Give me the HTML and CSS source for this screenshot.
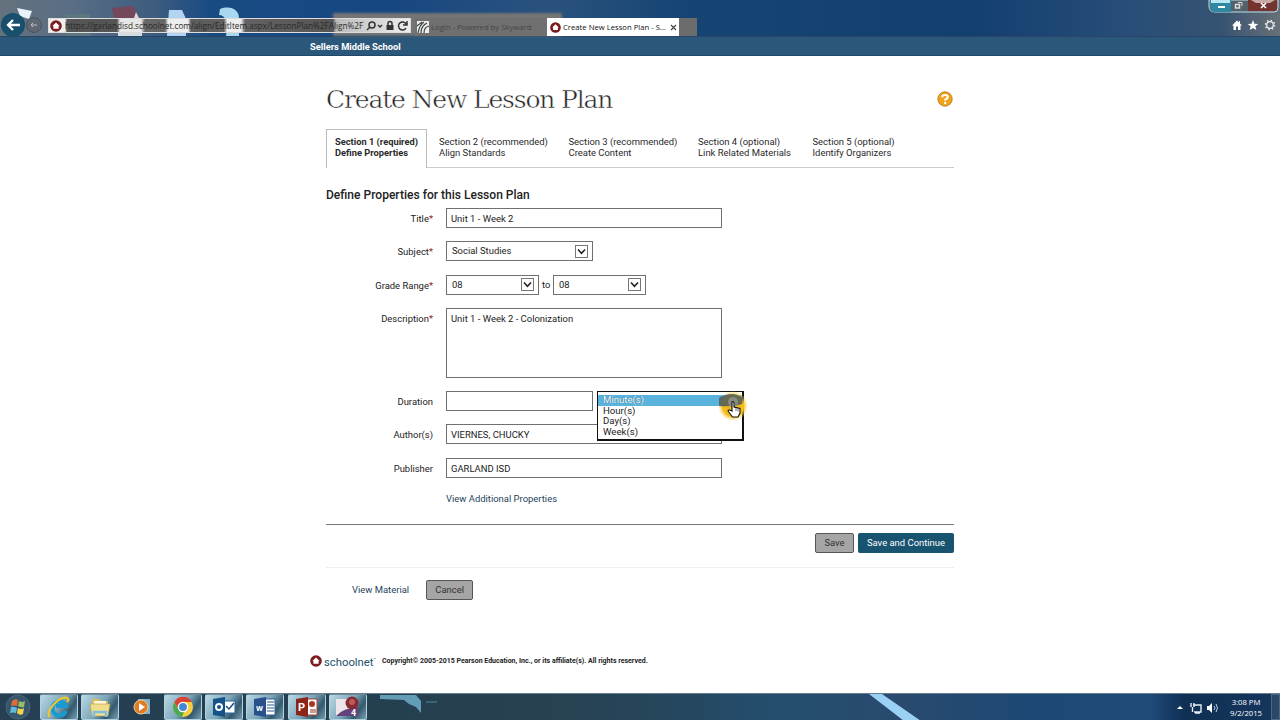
FILE: index.html
```html
<!DOCTYPE html>
<html lang="en">
<head>
<meta charset="UTF-8">
<meta name="viewport" content="width=device-width, initial-scale=1.0">
<title>Create New Lesson Plan - Schoolnet</title>
<link rel="stylesheet" href="styles.css">
</head>
<body>

<!-- shared symbols -->
<svg class="defs" width="0" height="0">
    <symbol id="badge" viewBox="0 0 12 12">
        <circle cx="6" cy="6" r="5.8" fill="#7c1c20"/>
        <path d="M6 2.5 L9.6 6 H8.6 V8.8 H3.4 V6 H2.4 Z" fill="#fff"/>
    </symbol>
    <symbol id="chevron" viewBox="0 0 13 13">
        <rect x=".5" y=".5" width="12" height="12" fill="#fff" stroke="#777"/>
        <path d="M3 4.5 L6.5 8.300 L10 4.5" fill="none" stroke="#222" stroke-width="1.6"/>
    </symbol>
</svg>

<header class="browser">
    <svg class="wallpaper" width="1280" height="36">
        <g filter="url(#soft)">
            <path d="M17 8 L32 11 L29 19 L20 16Z" fill="#e8f2f8"/>
            <path d="M64 14 H90 V36 H66Z" fill="#5c7780"/>
            <path d="M112 8 L133 6 L140 18 H114Z" fill="#74475a"/>
            <path d="M136 12 L139 18 H134Z" fill="#d4dce2"/>
            <path d="M118 18 H142 V36 H118Z" fill="#d4dce2"/>
            <path d="M169 10 H182 L186 19 V36 H167 Z" fill="#b3d5f3"/>
            <path d="M220 9 C231 5 239 10 239 18 V36 H226 C229 22 225 15 219 15Z" fill="#a9d9ef"/>
        </g>
        <defs><filter id="soft"><feGaussianBlur stdDeviation=".7"/></filter></defs>
    </svg>
    <div class="nav-buttons">
        <svg width="48" height="36" viewBox="0 0 48 36">
            <circle cx="13" cy="25" r="12" fill="#174f6c"/>
            <path d="M20 25 H8 M13 20 L8 25 L13 30" fill="none" stroke="#fff" stroke-width="2.3"/>
            <circle cx="34" cy="25" r="7.5" fill="#5f6873" stroke="#485361"/>
            <path d="M37 25 H31 M33 23 L31 25 L33 27" fill="none" stroke="#b9c0c6"/>
        </svg>
    </div>
    <div class="address">
        <svg width="12" height="12"><use href="#badge"/></svg>
        <span class="url">https://garlandisd.schoolnet.com/align/EditItem.aspx/LessonPlan%2FAlign%2F</span>
        <svg class="address-tools" width="44" height="12" viewBox="0 0 44 12">
            <g fill="none" stroke="#333" stroke-width="1.5">
                <circle cx="6" cy="5" r="3"/><path d="M4 7 L1 10"/>
                <path d="M12 5 L14 7 L16 5"/>
                <path d="M22 5 V3.5 A2 2 0 0 1 26 3.5 V5"/>
                <path d="M40 4 A4 4 0 1 0 40 8 M41 1 V5 H37"/>
            </g>
            <rect x="20.5" y="5" width="7" height="5" fill="#333"/>
        </svg>
    </div>
    <div class="tab">
        <svg width="12" height="12" viewBox="0 0 12 12">
            <rect width="12" height="12" fill="#eee"/>
            <path d="M1 12 C2 7 4 3 7 1 M4 12 C4 8 6 4 10 2 M7 12 C7 8 8 6 12 5 M0 5 L5 1" fill="none" stroke="#3c4446" stroke-width="1.2"/>
        </svg>
        <span>Login - Powered by Skyward</span>
    </div>
    <div class="tab active">
        <svg width="11" height="11"><use href="#badge"/></svg>
        <span>Create New Lesson Plan - S...</span>
        <svg class="close" width="7" height="7" viewBox="0 0 7 7"><path d="M1 1 L6 6 M6 1 L1 6" stroke="#444" stroke-width="1.2"/></svg>
    </div>
    <div class="new-tab"></div>
    <div class="window-area">
        <svg width="72" height="14" viewBox="0 0 72 14">
            <path d="M1 0 H70 V8 Q70 12 66 12 H7 Q1 12 1 6 Z" fill="#53616b" stroke="#bfdbe5"/>
            <path d="M2 0 H23 V12 H7 Q2 12 2 6Z" fill="#2f87a1"/>
            <path d="M3 0 H22 V3 H3Z" fill="#b8e7f4"/>
            <path d="M40 0 H69 V8 Q69 11 66 11 H40Z" fill="#74332f"/>
            <path d="M43 0 H67 L62 3 H48Z" fill="#c9a9a4"/>
            <path d="M10 7 H17" stroke="#fff" stroke-width="2"/>
            <rect x="27.5" y="4.5" width="4" height="3.5" fill="none" stroke="#ddd" stroke-width="1.5"/>
            <path d="M30 2.5 H34 V6" fill="none" stroke="#ddd"/>
            <path d="M53 3 L58 8 M58 3 L53 8" stroke="#fff" stroke-width="1.6"/>
        </svg>
        <svg class="tools" width="48" height="12" viewBox="0 0 48 12">
            <path d="M1 6.5 L6 1.5 L8 3.5 V2 H9 V4.5 L11 6.5 H9.5 V11 H7 V7.5 H5 V11 H2.5 V6.5Z" fill="#fff"/>
            <path d="M22 1 L23.4 4.7 L27.3 4.9 L24.3 7.3 L25.3 11 L22 8.9 L18.7 11 L19.7 7.3 L16.7 4.9 L20.6 4.7Z" fill="#fff"/>
            <circle cx="39" cy="6" r="3.3" fill="none" stroke="#f2f2f2" stroke-width="1.2"/>
            <circle cx="39" cy="6" r="4.7" fill="none" stroke="#f2f2f2" stroke-width="1.2" stroke-dasharray="1.5 2.19"/>
        </svg>
    </div>
</header>

<div class="school-bar">Sellers Middle School</div>

<main class="page">
    <div class="title-row">
        <h1>Create New Lesson Plan</h1>
        <svg width="16" height="16" viewBox="0 0 16 16">
            <circle cx="8" cy="8" r="7.2" fill="#f1a21b" stroke="#a87422" stroke-width=".8"/>
            <path d="M5.3 6.3 Q5.3 4 8 4 Q10.8 4 10.8 6 Q10.8 7.4 8.2 8.6 V9.7" fill="none" stroke="#fff" stroke-width="2"/>
            <circle cx="8.2" cy="12" r="1.2" fill="#fff"/>
        </svg>
    </div>

    <nav class="sections">
        <a class="section current">Section 1 (required)<br>Define Properties</a>
        <a class="section s2">Section 2 (recommended)<br>Align Standards</a>
        <a class="section s3">Section 3 (recommended)<br>Create Content</a>
        <a class="section s4">Section 4 (optional)<br>Link Related Materials</a>
        <a class="section s5">Section 5 (optional)<br>Identify Organizers</a>
    </nav>

    <h2>Define Properties for this Lesson Plan</h2>

    <form class="properties">
        <label>Title<i>*</i></label>
        <div class="field wide">Unit 1 - Week 2</div>

        <label>Subject<i>*</i></label>
        <div class="field select medium">Social Studies <svg width="13" height="13"><use href="#chevron"/></svg></div>

        <label>Grade Range<i>*</i></label>
        <div class="range">
            <div class="field select small">08 <svg width="13" height="13"><use href="#chevron"/></svg></div>
            <span>to</span>
            <div class="field select small">08 <svg width="13" height="13"><use href="#chevron"/></svg></div>
        </div>

        <label>Description<i>*</i></label>
        <div class="field wide area">Unit 1 - Week 2 - Colonization</div>

        <label>Duration</label>
        <div class="duration">
            <div class="field medium"></div>
            <div class="dropdown">
                <div class="option selected">Minute(s)</div>
                <div class="option">Hour(s)</div>
                <div class="option">Day(s)</div>
                <div class="option">Week(s)</div>
                <svg class="pointer" width="34" height="34" viewBox="0 0 34 34">
                    <defs>
                        <radialGradient id="glow">
                            <stop offset="0" stop-color="#e3ae22"/>
                            <stop offset=".7" stop-color="#f5bd1d"/>
                            <stop offset="1" stop-color="#ffd860" stop-opacity="0"/>
                        </radialGradient>
                    </defs>
                    <circle cx="17" cy="17" r="15" fill="url(#glow)"/>
                    <path d="M3 9 Q16 1 27 9 L26 15 Q17 18 3 17Z" fill="#4d5a5c" opacity=".85"/>
                    <circle cx="17" cy="13" r="5" fill="#898b82"/>
                    <path d="M16 13 Q17.5 12 18 14 V18 L24 19.5 V24 L22 28 H16.500 L12 22 Q12.500 20 16 22Z" fill="#fff" stroke="#111" stroke-width="1.1"/>
                    <path d="M20 19 V22 M22 19.500 V22.500" stroke="#333" stroke-width=".7"/>
                </svg>
            </div>
        </div>

        <label>Author(s)</label>
        <div class="field wide">VIERNES, CHUCKY</div>

        <label>Publisher</label>
        <div class="field wide">GARLAND ISD</div>
    </form>

    <a class="more">View Additional Properties</a>

    <div class="actions">
        <button class="grey save">Save</button>
        <button class="primary">Save and Continue</button>
    </div>

    <div class="secondary">
        <a>View Material</a>
        <button class="grey cancel">Cancel</button>
    </div>
</main>

<footer class="footer">
    <svg width="12" height="12"><use href="#badge"/></svg>
    <span class="brand">schoolnet<sup>&#8482;</sup></span>
    <span class="copyright">Copyright© 2005-2015 Pearson Education, Inc., or its affiliate(s). All rights reserved.</span>
</footer>

<div class="taskbar">
    <div class="start">
        <svg width="30" height="27" viewBox="0 0 30 27">
            <circle cx="15" cy="13" r="12" fill="#36566c" stroke="#567181" stroke-width=".7"/>
            <path d="M9 7 Q12 4 15 6 L14 12 Q11 11 8 12Z" fill="#dc6e38"/>
            <path d="M16 7 Q19 9 22 7 L21 13 Q18 14 15 12Z" fill="#98bd64"/>
            <path d="M8 13 Q11 12 14 14 L13 19 Q10 18 7 19Z" fill="#60bade"/>
            <path d="M15 14 Q18 16 21 14 L20 20 Q17 22 14 19Z" fill="#f4d44d"/>
        </svg>
    </div>
    <div class="task">
        <svg width="24" height="24" viewBox="0 0 24 24">
            <path d="M19 16 A7 7 0 1 1 19 11 H9" fill="none" stroke="#199bd1" stroke-width="4"/>
            <path d="M3 22 C-3 18 12 0 20 3 C23 4 20 7 20 7" fill="none" stroke="#efc52c" stroke-width="2.2"/>
        </svg>
    </div>
    <div class="task">
        <svg width="24" height="24" viewBox="0 0 24 24">
            <path d="M4 4 H11 L13 6 H20 V19 H4Z" fill="#d9bd64"/>
            <path d="M6 6 H18 V11 H6Z" fill="#fff8d5"/>
            <path d="M2 9 H22 L20 21 H4Z" fill="#f0de8b" stroke="#b69b48" stroke-width=".6"/>
            <path d="M6 22 V17 H18 V22" fill="none" stroke="#80bedf" stroke-width="2.5"/>
        </svg>
    </div>
    <div class="task plain">
        <svg width="20" height="20" viewBox="0 0 20 20">
            <path d="M6 2 H18 V17 H6Z" fill="#7bb0cf"/>
            <circle cx="9" cy="10" r="7" fill="#e17b24" stroke="#eecf9b"/>
            <path d="M7 6 L13 10 L7 14Z" fill="#fff"/>
        </svg>
    </div>
    <div class="task">
        <svg width="22" height="22" viewBox="0 0 22 22">
            <circle cx="11" cy="11" r="10" fill="#f6cf3e"/>
            <path d="M2.3 6 A10 10 0 0 1 20 6 H11 A5 5 0 0 0 6.5 13Z" fill="#d84336"/>
            <path d="M2.3 6 L7 14 A5 5 0 0 0 12 16 L10 21 A10 10 0 0 1 2.3 6" fill="#4da852"/>
            <circle cx="11" cy="11" r="4.6" fill="#4387d4" stroke="#fff" stroke-width="1.3"/>
        </svg>
    </div>
    <div class="task">
        <svg width="24" height="22" viewBox="0 0 24 22">
            <rect x="11" y="5" width="12" height="12" fill="#fff" stroke="#28659a"/>
            <path d="M14 10 L17 13 L22 7" fill="none" stroke="#174f83" stroke-width="1.5"/>
            <path d="M1 3 L13 1 V21 L1 19Z" fill="#145288"/>
            <circle cx="7" cy="11" r="3" fill="none" stroke="#fff" stroke-width="2"/>
        </svg>
    </div>
    <div class="task">
        <svg width="24" height="22" viewBox="0 0 24 22">
            <rect x="11" y="3" width="11" height="16" fill="#fff" stroke="#315f9a"/>
            <path d="M14 6 H21 M14 9 H21 M14 12 H21 M14 15 H21" stroke="#31568b"/>
            <path d="M1 3 L13 1 V21 L1 19Z" fill="#28518c"/>
            <text x="3" y="15" class="letter word">W</text>
        </svg>
    </div>
    <div class="task">
        <svg width="24" height="22" viewBox="0 0 24 22">
            <rect x="11" y="3" width="11" height="16" fill="#fff" stroke="#a14330"/>
            <circle cx="17" cy="8" r="3" fill="#a63726"/><path d="M15 14 H21 M15 16 H21" stroke="#943322"/>
            <path d="M1 3 L13 1 V21 L1 19Z" fill="#8c2419"/>
            <text x="3" y="15" class="letter">P</text>
        </svg>
    </div>
    <div class="task">
        <svg width="26" height="24" viewBox="0 0 26 24">
            <rect x="1" y="4" width="15" height="17" fill="#eee5eb"/>
            <path d="M1 21 Q8 13 23 12 V21Z" fill="#654179"/>
            <circle cx="17" cy="8" r="6.5" fill="#852b35"/><circle cx="17" cy="7" r="3" fill="#bd5b5b"/>
            <text x="16" y="21" class="letter four">4</text>
        </svg>
    </div>
    <svg class="streaks" width="540" height="27" viewBox="0 0 540 27">
        <g filter="url(#soft)">
            <path d="M0 1 H36 L41 7 V19 L36 13 L29 10 L24 6 L0 5Z" fill="#649cb5"/>
            <path d="M46 8 H57" stroke="#4e849d"/>
            <path d="M489 0 H502 L541 27 H524Z" fill="#9ad0f3"/>
        </g>
    </svg>
    <div class="tray">
        <svg width="46" height="14" viewBox="0 0 46 14">
            <path d="M3 8 L6 5 L9 8Z" fill="#fff"/>
            <path d="M19 4 H27 V11 H20 M17 2 V6 M20 2 V6 M18.5 6 V11 M21 12 H26" fill="none" stroke="#e8eef3" stroke-width="1.4"/>
            <path d="M33 5 H35 L38 2 V12 L35 9 H33Z" fill="#fff"/><path d="M40 5 Q42 7 40 9 M42 3 Q45 7 42 11" fill="none" stroke="#bdd0dc"/>
        </svg>
        <div class="clock">3:08 PM<br>9/2/2015</div>
        <div class="peek"></div>
    </div>
</div>

</body>
</html>
```
FILE: styles.css
```css
* {
    box-sizing: border-box;
}
body {
    margin: 0;
    width: 1280px;
    height: 720px;
    overflow: hidden;
    display: flex;
    flex-direction: column;
    background: #fff;
    color: #222;
    font: 9.45px/12px Roboto, "Liberation Sans", sans-serif;
}
svg {
    flex: none;
}
.defs {
    position: absolute;
}

/* Browser frame */
.browser {
    position: relative;
    flex: none;
    height: 37px;
    display: flex;
    border-bottom: 1px solid #294563;
    background: linear-gradient(90deg, #65727e 0, #596d85 75px, #3d5c7f 155px, #194b83 210px, #174781 390px, #2a527d 550px, #164574 680px, #123e70 970px, #284e78 1130px, #365271 1220px, #687077 1280px);
}
.wallpaper {
    position: absolute;
    left: 0;
    top: 0;
}
.browser::before {
    content: "";
    position: absolute;
    left: 333px;
    top: 13px;
    width: 229px;
    height: 23px;
    background: #747574;
    filter: blur(1px);
}
.nav-buttons, .address, .tab, .new-tab, .window-area {
    position: relative;
}
.address {
    width: 363px;
    height: 15px;
    margin-top: 18px;
    padding-left: 1px;
    display: flex;
    align-items: center;
    gap: 3px;
    border: 1px solid #ddd;
    background: linear-gradient(90deg, #eee 0, #eee 16px, #555 18px, #555 68px, #e8e8e8 71px, #e8e8e8 92px, #666 96px, #666 116px, #eee 119px, #eee 139px, #5c5c5c 142px, #606060 175px, #eee 178px, #eee 192px, #626262 196px, #555 284px, #bbb 287px, #eee 100%);
}
.url {
    flex: 1;
    white-space: nowrap;
    font-family: "Open Sans", sans-serif;
    font-size: 8.2px;
    color: #292929;
}
.tab {
    margin: 18px 0 0 4px;
    width: 132px;
    height: 18px;
    padding-left: 2px;
    display: flex;
    align-items: center;
    gap: 2px;
    color: #454545;
    background: #707070;
    font-family: "Open Sans", sans-serif;
    font-size: 7.7px;
    white-space: nowrap;
}
.tab.active {
    margin-left: 0;
    padding-left: 3px;
    gap: 2px;
    background: #fff;
    color: #111;
}
.tab .close {
    margin-left: 2px;
}
.new-tab {
    width: 18px;
    height: 18px;
    margin-top: 18px;
    background: #6c6c6c;
}
.window-area {
    margin-left: auto;
    width: 72px;
    display: flex;
    flex-direction: column;
    gap: 5px;
}
.tools {
    margin-left: 23px;
}
.school-bar {
    flex: none;
    height: 19px;
    padding-left: 310px;
    background: #2b587a;
    border-bottom: 1px solid #1e496b;
    color: #fff;
    font-size: 9.3px;
    font-weight: 700;
    line-height: 20px;
}

/* Lesson plan form */
.page {
    width: 628px;
    margin-left: 326px;
}
.title-row {
    height: 73px;
    padding-top: 28px;
    display: flex;
    justify-content: space-between;
}
.title-row svg {
    margin: 7px 1px 0 0;
}
h1 {
    margin: 0;
    font: 400 25px/32px "DejaVu Serif", serif;
    letter-spacing: -1.15px;
    -webkit-text-stroke: 0.5px #fff;
}
.sections {
    height: 39px;
    display: flex;
    border-bottom: 1px solid #ccc;
}
.section {
    padding: 7px 0 0 12px;
    line-height: 11px;
    white-space: nowrap;
}
.section.current {
    width: 101px;
    height: 39px;
    padding: 6px 0 0 8px;
    border: 1px solid #bbb;
    border-bottom: 0;
    background: #fff;
    font-size: 9.3px;
    font-weight: 700;
}
.s2, .s3 {
    width: 129.5px;
}
.s4 {
    width: 114.5px;
}
h2 {
    margin: 20px 0 5px;
    font-size: 12.05px;
    font-weight: 500;
    line-height: 15px;
}
.properties {
    display: grid;
    grid-template-columns: 107px 1fr;
    column-gap: 13px;
    row-gap: 13.25px;
}
.properties label {
    height: 20px;
    line-height: 21px;
    text-align: right;
    white-space: nowrap;
}
.properties i {
    color: #8c1c2c;
    font-style: normal;
}
.field {
    height: 20px;
    padding-left: 4px;
    border: 1px solid #707070;
    background: #fff;
    line-height: 20px;
}
.wide {
    width: 276px;
}
.medium {
    width: 147px;
}
.small {
    width: 93px;
}
.area {
    height: 70px;
}
.select {
    padding: 0 4px 0 5px;
    display: flex;
    align-items: center;
    justify-content: space-between;
}
.range {
    display: flex;
    gap: 3px;
    line-height: 20px;
}
.range span {
    width: 8px;
}
.duration {
    display: flex;
    gap: 4px;
    height: 20px;
}
.dropdown {
    position: relative;
    z-index: 2;
    width: 147px;
    height: 50px;
    padding-top: 3px;
    border: 1px solid #111;
    border-width: 1px 2px 2px 1px;
    background: #fff;
    font-size: 9.6px;
}
.option {
    height: 10.7px;
    padding-left: 5px;
    line-height: 10.7px;
}
.option.selected {
    color: #fff;
    background: #5ab3dc;
    text-shadow: 0 0 1px #174e68;
}
.pointer {
    position: absolute;
    left: 118px;
    top: -3px;
}
a {
    color: #1d445b;
}
.sections a {
    color: #2a2a2a;
}
.more {
    display: block;
    margin: 15px 0 19px 120px;
}
.actions {
    height: 44px;
    padding-top: 8px;
    display: flex;
    justify-content: flex-end;
    gap: 4px;
    border-top: 1px solid #777;
    border-bottom: 1px solid #eee;
}
button {
    height: 20px;
    padding: 0;
    border: 0;
    border-radius: 2px;
    font: inherit;
}
.primary {
    width: 96px;
    background: #185370;
    color: #fff;
}
.grey {
    border: 1px solid #555;
    background: #a5a5a5;
    color: #333;
}
.save {
    width: 39px;
}
.cancel {
    width: 47px;
}
.secondary {
    padding: 12px 0 0 26px;
    display: flex;
    align-items: center;
    gap: 17px;
}
.footer {
    margin: auto 0 25px 310px;
    height: 14px;
    display: flex;
    align-items: center;
}
.brand {
    flex: none;
    width: 54px;
    margin: 0 4px 0 2px;
    color: #23506a;
    font-size: 11.3px;
}
.brand sup {
    font-size: 4px;
}
.copyright {
    font-size: 7px;
    font-weight: 700;
    white-space: nowrap;
}

/* Desktop taskbar */
.taskbar {
    position: relative;
    flex: none;
    height: 27px;
    display: flex;
    border-top: 1px solid #687e8c;
    background: linear-gradient(90deg, #263f53 0, #243f50 370px, #284150 530px, #26465b 660px, #244e70 780px, #294a6e 900px, #1d4875 1030px, #204a79 1150px, #102f54 1185px, #15365d 1280px);
}
.start {
    width: 40px;
    padding-left: 3px;
}
.task {
    width: 38px;
    height: 26px;
    margin-right: 3.3px;
    display: flex;
    align-items: center;
    justify-content: center;
    border: 1px solid #b0d2df;
    border-top-color: #6e8997;
    border-radius: 2px;
    background: linear-gradient(125deg, #b9d8e4, #7ba5b9 50%, #34596d 75%, #789fb2);
}
.task.plain {
    border-color: transparent;
    background: none;
}
.letter {
    fill: #fff;
    font: 700 11px Roboto, sans-serif;
}
.word {
    font-size: 8px;
}
.four {
    font-size: 9px;
}
.streaks {
    position: absolute;
    left: 380px;
    top: 0;
}
.tray {
    margin-left: auto;
    display: flex;
}
.tray > svg {
    margin-top: 7px;
}
.clock {
    width: 40px;
    margin: 3px 5px 0 6px;
    color: #fff;
    font: 7.7px/11px "Open Sans", sans-serif;
    text-align: center;
}
.peek {
    width: 9px;
    border: 1px solid #4c6883;
    background: #294766;
}
```
